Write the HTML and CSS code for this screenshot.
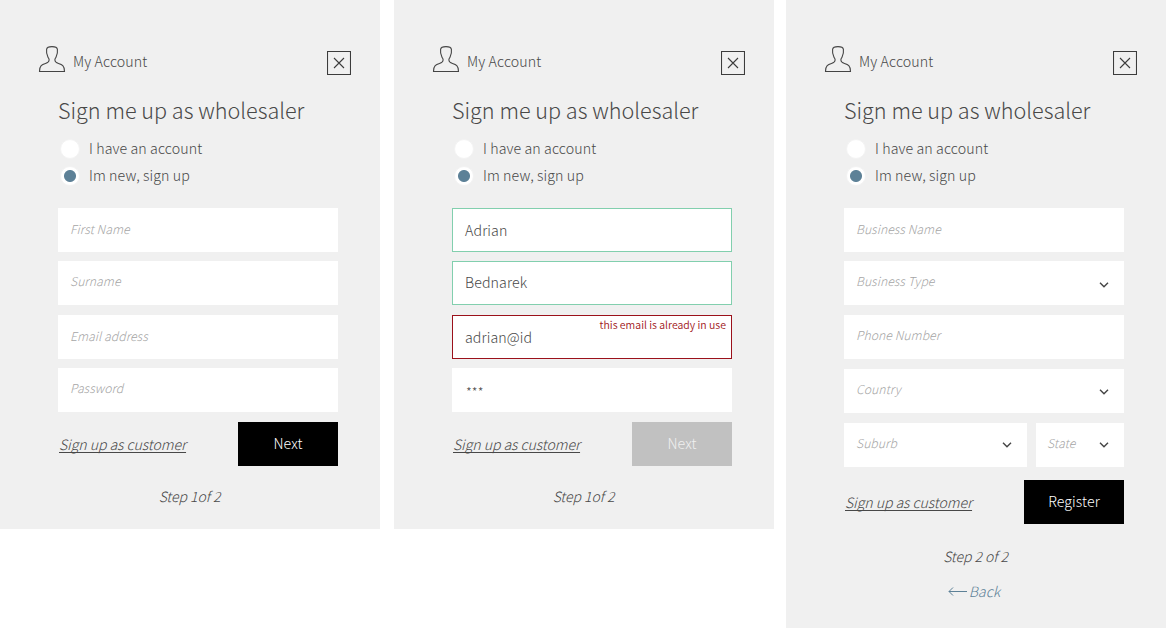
FILE: index.html
```
<!DOCTYPE html>
<html lang="en">
<head>
<meta charset="utf-8">
<title>Wholesaler sign up</title>
<link rel="stylesheet" href="styles.css">
</head>
<body>
<svg class="defs" width="0" height="0">
  <symbol id="user" viewBox="0 0 28 28"><path d="M9.9 12 C8.7 9.5 8.3 6.5 8.6 4.4 C8.9 2.2 11 1.6 14 1.6 C17 1.6 19.1 2.2 19.4 4.4 C19.7 6.5 19.3 9.5 18.1 12 C17.5 13.2 16.9 13.6 16.9 14.8 C16.9 16.9 18.2 17.8 20.5 18.5 C24 19.5 26.5 20.6 26.5 26.5 H1.5 C1.5 20.6 4 19.5 7.5 18.5 C9.8 17.8 11.1 16.9 11.1 14.8 C11.1 13.6 10.5 13.2 9.9 12 Z" fill="none" stroke="#444" stroke-width="1.1"/></symbol>
  <symbol id="close" viewBox="0 0 24 24"><path d="M.5 .5H23.5V23.5H.5Z M7 7L17 17M17 7L7 17" fill="none" stroke="#3c3c3c" stroke-width="1.1"/></symbol>
  <symbol id="chevron" viewBox="0 0 10 6"><path d="M1 .7L5 4.7L9 .7" fill="none" stroke="#444" stroke-width="1.4"/></symbol>
</svg>
<main class="board">
  <section class="panel">
    <header class="head"><svg class="user"><use href="#user"/></svg><span class="account">My Account</span><svg class="close"><use href="#close"/></svg></header>
    <h1 class="title">Sign me up as wholesaler</h1>
    <div class="option"><i class="radio"></i><span>I have an account</span></div>
    <div class="option"><i class="radio on"></i><span>Im new, sign up</span></div>
    <div class="fields">
      <div class="field"><span class="ph">First Name</span></div>
      <div class="field"><span class="ph up">Surname</span></div>
      <div class="field gap"><span class="ph">Email address</span></div>
      <div class="field"><span class="ph up">Password</span></div>
    </div>
    <div class="actions"><a class="link">Sign up as customer</a><div class="button">Next</div></div>
    <p class="step">Step 1of 2</p>
  </section>
  <section class="panel">
    <header class="head"><svg class="user"><use href="#user"/></svg><span class="account">My Account</span><svg class="close"><use href="#close"/></svg></header>
    <h1 class="title">Sign me up as wholesaler</h1>
    <div class="option"><i class="radio"></i><span>I have an account</span></div>
    <div class="option"><i class="radio on"></i><span>Im new, sign up</span></div>
    <div class="fields">
      <div class="field valid"><span class="value">Adrian</span></div>
      <div class="field valid"><span class="value up">Bednarek</span></div>
      <div class="field invalid gap"><span class="value">adrian@id</span><span class="error">this email is already in use</span></div>
      <div class="field"><span class="value stars">***</span></div>
    </div>
    <div class="actions"><a class="link">Sign up as customer</a><div class="button disabled">Next</div></div>
    <p class="step">Step 1of 2</p>
  </section>
  <section class="panel tall">
    <header class="head"><svg class="user"><use href="#user"/></svg><span class="account">My Account</span><svg class="close"><use href="#close"/></svg></header>
    <h1 class="title">Sign me up as wholesaler</h1>
    <div class="option"><i class="radio"></i><span>I have an account</span></div>
    <div class="option"><i class="radio on"></i><span>Im new, sign up</span></div>
    <div class="fields">
      <div class="field"><span class="ph">Business Name</span></div>
      <div class="field"><span class="ph up">Business Type</span><svg class="chevron"><use href="#chevron"/></svg></div>
      <div class="field gap"><span class="ph up">Phone Number</span></div>
      <div class="field gap"><span class="ph up">Country</span><svg class="chevron high"><use href="#chevron"/></svg></div>
      <div class="row gap">
        <div class="field suburb"><span class="ph up">Suburb</span><svg class="chevron high"><use href="#chevron"/></svg></div>
        <div class="field state"><span class="ph up">State</span><svg class="chevron high"><use href="#chevron"/></svg></div>
      </div>
    </div>
    <div class="actions"><a class="link">Sign up as customer</a><div class="button">Register</div></div>
    <p class="step">Step 2 of 2</p>
    <p class="back"><svg class="arrow" viewBox="0 0 19 10"><path d="M19 5.5H1M5 1.5L1 5.5L5 9.5" fill="none" stroke="#5d8197" stroke-width="1"/></svg><span>Back</span></p>
  </section>
</main>
</body>
</html>
```
FILE: styles.css
```
* { box-sizing: border-box; }
body { margin: 0; background: #fff; color: #484848; font: 300 14.2px "Noto Sans CJK SC", "Open Sans", sans-serif; letter-spacing: .1px; white-space: nowrap; }
.defs { display: block; height: 0; }
.board { display: flex; align-items: flex-start; gap: 14px; }
.panel { width: 380px; height: 529px; background: #f0f0f0; padding: 45px 42px 0 58px; }
.tall { height: 628px; margin-left: -2px; }
.head { display: flex; height: 34px; margin: 0 -13px 0 -20px; align-items: flex-start; }
.user { width: 28px; height: 28px; }
.account { margin-left: 7px; line-height: 33px; }
.close { width: 24px; height: 24px; margin: 6px 0 0 auto; }
.title { margin: 15px 0 9px; height: 32px; font-size: 21.6px; line-height: 32px; font-weight: 300; letter-spacing: 0; }
.option { display: flex; align-items: center; height: 27px; line-height: 27px; gap: 9px; padding-left: 2px; }
.radio { width: 20px; height: 20px; border-radius: 50%; background: #fff; border: 1px solid #f3f3f3; }
.radio.on { background: radial-gradient(circle, #5d8197 5.5px, #fff 6.5px); }
.fields { padding-top: 19px; display: flex; flex-direction: column; }
.field { display: flex; height: 44px; background: #fff; border: 1px solid #fff; padding-left: 12px; position: relative; margin-top: 9px; }
.field:first-child { margin-top: 0; }
.field.gap, .row.gap { margin-top: 10px; }
.valid { border-color: #82cfae; }
.invalid { border-color: #9b111b; }
.ph { font-size: 12.2px; font-style: italic; color: #a5a5a5; line-height: 40px; margin-left: -1px; letter-spacing: .06px; }
.ph.up { line-height: 38px; }
.value { line-height: 43px; }
.value.up { line-height: 41px; }
.value.stars { font-size: 13px; line-height: 46px; padding-left: 1px; }
.error { position: absolute; right: 5px; top: 1px; font-size: 10.5px; line-height: 16px; color: #a01520; font-weight: 350; letter-spacing: 0; }
.chevron { width: 10px; height: 6px; margin: 20px 14.5px 0 auto; }
.chevron.high { margin-top: 19px; }
.row { display: flex; gap: 9px; }
.row .field { margin-top: 0; }
.suburb { width: 183px; }
.state { width: 88px; padding-left: 11px; }
.row .chevron.high { margin-top: 18px; }
.actions { display: flex; justify-content: space-between; margin-top: 10px; }
.tall .actions { margin-top: 13px; }
.link { font-size: 14.1px; font-style: italic; letter-spacing: -.05px; line-height: 20px; height: 20px; margin: 12px 0 0 1px; text-decoration: underline; text-decoration-skip-ink: none; text-underline-offset: 2px; text-decoration-thickness: 1px; }
.button { width: 100px; height: 44px; background: #000; color: #fff; text-align: center; line-height: 43px; }
.disabled { background: #c1c1c1; color: #f0f0f0; }
.step { margin: 20px 0 0; padding-right: 17px; text-align: center; font-size: 14px; font-style: italic; line-height: 20px; letter-spacing: -.05px; }
.tall .step { margin-top: 22px; }
.back { display: flex; justify-content: center; align-items: center; gap: 2px; margin: 15px 0 0; padding-right: 20px; color: #5d8197; font-size: 14.2px; font-style: italic; line-height: 20px; }
.arrow { width: 19px; height: 10px; }
```
